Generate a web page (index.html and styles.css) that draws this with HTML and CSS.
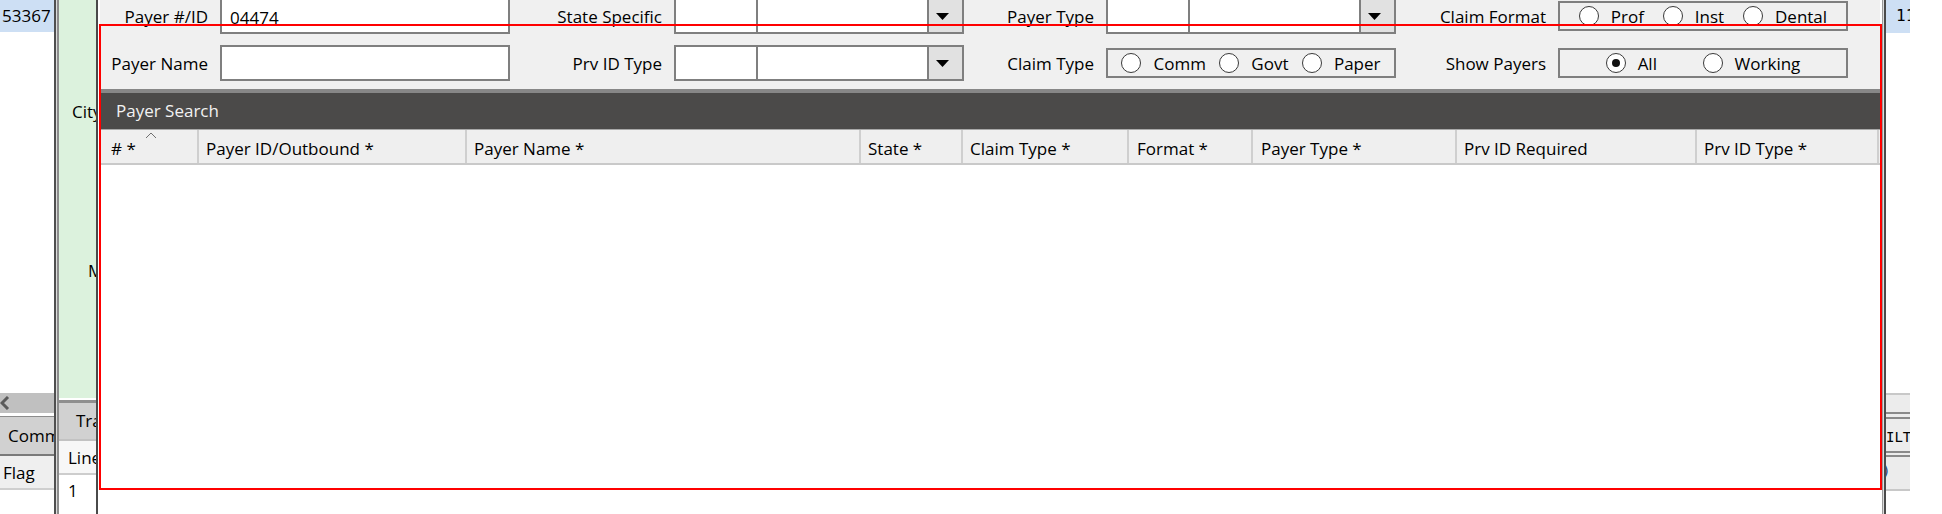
FILE: index.html
```html
<!DOCTYPE html>
<html>
<head>
<meta charset="utf-8">
<title>Payer Search</title>
<link rel="stylesheet" href="styles.css">
</head>
<body>
<div class="app">
  <div class="col-left">
    <div class="cell-blue">53367</div>
    <div class="fill"></div>
    <div class="hscroll">
      <svg class="arrow-left" width="10" height="14" viewBox="0 0 10 14"><polyline points="8,1 2,7 8,13" fill="none" stroke="#5a5a5a" stroke-width="3"/></svg>
    </div>
    <div class="tab-head">Comm</div>
    <div class="tab-row">Flag</div>
    <div class="tail"></div>
  </div>
  <div class="sep-a"></div>
  <div class="col-mid">
    <div class="green">
      <div class="city">City</div>
      <div class="mlbl">M</div>
    </div>
    <div class="mid-head">Tra</div>
    <div class="mid-row">Line</div>
    <div class="mid-cell">1</div>
  </div>
  <div class="sep-b"></div>
  <div class="dialog">
    <div class="form">
      <div class="lbl">Payer #/ID</div>
      <div class="input">04474</div>
      <div class="lbl">State Specific</div>
      <div class="dd"><div class="dd-a"></div><div class="dd-b"></div><div class="dd-btn"><svg width="13" height="7" viewBox="0 0 13 7"><polygon points="0,0 13,0 6.5,7" fill="#000"/></svg></div></div>
      <div class="lbl">Payer Type</div>
      <div class="dd"><div class="dd-a"></div><div class="dd-b"></div><div class="dd-btn"><svg width="13" height="7" viewBox="0 0 13 7"><polygon points="0,0 13,0 6.5,7" fill="#000"/></svg></div></div>
      <div class="lbl">Claim Format</div>
      <div class="rg">
        <div class="radio"><span class="circ"></span><span class="rtxt">Prof</span></div>
        <div class="radio"><span class="circ"></span><span class="rtxt">Inst</span></div>
        <div class="radio"><span class="circ"></span><span class="rtxt">Dental</span></div>
      </div>

      <div class="lbl">Payer Name</div>
      <div class="input"></div>
      <div class="lbl">Prv ID Type</div>
      <div class="dd"><div class="dd-a"></div><div class="dd-b"></div><div class="dd-btn"><svg width="13" height="7" viewBox="0 0 13 7"><polygon points="0,0 13,0 6.5,7" fill="#000"/></svg></div></div>
      <div class="lbl">Claim Type</div>
      <div class="rg">
        <div class="radio"><span class="circ"></span><span class="rtxt">Comm</span></div>
        <div class="radio"><span class="circ"></span><span class="rtxt">Govt</span></div>
        <div class="radio"><span class="circ"></span><span class="rtxt">Paper</span></div>
      </div>
      <div class="lbl">Show Payers</div>
      <div class="rg">
        <div class="radio"><span class="circ on"></span><span class="rtxt">All</span></div>
        <div class="radio"><span class="circ"></span><span class="rtxt">Working</span></div>
      </div>
    </div>
    <div class="titlebar">Payer Search</div>
    <div class="thead">
      <div class="th w1">
        <svg class="sort" width="12" height="7" viewBox="0 0 12 7"><polyline points="1,6 6,1 11,6" fill="none" stroke="#707070" stroke-width="1"/></svg>
        # *
      </div>
      <div class="th w2">Payer ID/Outbound *</div>
      <div class="th w3">Payer Name *</div>
      <div class="th w4">State *</div>
      <div class="th w5">Claim Type *</div>
      <div class="th w6">Format *</div>
      <div class="th w7">Payer Type *</div>
      <div class="th w8">Prv ID Required</div>
      <div class="th w9">Prv ID Type *</div>
    </div>
    <div class="tbody"></div>
  </div>
  <div class="sep-c"></div>
  <div class="col-right">
    <div class="rc-blue">11</div>
    <div class="fill"></div>
    <div class="rc-a"></div>
    <div class="rc-b"></div>
    <div class="rc-c">ILT</div>
    <div class="rc-d"></div>
    <div class="rc-e">)</div>
    <div class="rc-tail"></div>
  </div>
  <div class="col-blank"></div>
</div>
<div class="highlight"></div>
</body>
</html>
```
FILE: styles.css
```css
* { box-sizing: border-box; }
html, body { margin: 0; padding: 0; }
body {
  width: 1942px;
  height: 514px;
  overflow: hidden;
  background: #ffffff;
  font-family: "Open Sans", "Liberation Sans", Arial, sans-serif;
  font-size: 17px;
  line-height: 20px;
  color: #000;
  position: relative;
}
.app { display: flex; height: 514px; }

/* ---------- left background column ---------- */
.col-left {
  width: 54px; flex: none;
  display: flex; flex-direction: column;
  overflow: hidden; white-space: nowrap;
}
.cell-blue { height: 32px; flex: none; background: #cddff4; padding: 6px 0 0 2px; }
.fill { flex: 1; }
.hscroll { height: 20px; flex: none; background: #c0c0c0; display: flex; align-items: center; }
.arrow-left { display: block; }
.tab-head {
  flex: none; height: 40px; margin-top: 3px;
  border-top: 1px solid #8c8c8c; border-bottom: 2px solid #7a7a7a;
  background: #d1d1d1; padding: 9px 0 0 8px;
}
.tab-row {
  flex: none; height: 34px; background: #efefef;
  border-bottom: 2px solid #cfcfcf; padding: 7px 0 0 3px;
}
.tail { flex: none; height: 24px; }

.sep-a {
  width: 5px; flex: none;
  border-left: 2px solid #4f4f4f; border-right: 2px solid #8c8c8c;
  background: #dcdcdc;
}

/* ---------- middle background column ---------- */
.col-mid {
  width: 37px; flex: none;
  display: flex; flex-direction: column;
  overflow: hidden; white-space: nowrap;
}
.green { height: 398px; flex: none; background: #dcf2dd; padding-top: 102px; }
.city { padding-left: 13px; }
.mlbl { padding-left: 29px; margin-top: 139px; }
.mid-head {
  flex: none; height: 41px; margin-top: 2px;
  border-top: 3px solid #8f8f8f; border-bottom: 2px solid #c2c2c2;
  background: #d1d1d1; padding: 8px 0 0 17px;
}
.mid-row {
  flex: none; height: 34px; background: #f7f7f7;
  border-bottom: 2px solid #cdcdcd; padding: 7px 0 0 9px;
}
.mid-cell { padding: 6px 0 0 9px; }

.sep-b { width: 2px; flex: none; background: #4a4a4a; }

/* ---------- dialog ---------- */
.dialog {
  width: 1782px; flex: none;
  border-left: 2px solid #ffffff;
  display: flex; flex-direction: column;
  overflow: hidden;
}
.form {
  flex: none;
  margin-top: -2px;
  background: #f0f0f0;
  display: grid;
  grid-template-columns: 108px 290px 140px 290px 118px 290px 138px 290px;
  grid-template-rows: 36px 36px;
  column-gap: 12px;
  row-gap: 11px;
  padding-bottom: 8px;
}
.lbl { text-align: right; padding-top: 9px; white-space: nowrap; }
.input {
  border: 2px solid #7f7f7f; background: #fff;
  padding: 8px 0 0 8px;
}
.dd { display: flex; border: 2px solid #7f7f7f; background: #fff; }
.dd-a { width: 80px; flex: none; }
.dd-b { width: 171px; flex: none; border-left: 2px solid #7f7f7f; }
.dd-btn {
  width: 35px; flex: none;
  border-left: 2px solid #7f7f7f; background: #e1e1e1;
  display: flex; align-items: center; padding-left: 7px;
}
.dd-btn svg { display: block; }
.rg {
  align-self: center; height: 30px;
  border: 2px solid #7f7f7f;
  display: flex; justify-content: space-evenly; align-items: center;
}
.radio { display: flex; align-items: center; gap: 12px; }
.circ {
  width: 20px; height: 20px; flex: none;
  border: 1px solid #3a3a3a; border-radius: 50%;
  background: #fff;
  display: flex; align-items: center; justify-content: center;
}
.circ.on::after {
  content: ""; width: 8px; height: 8px; border-radius: 50%; background: #111;
}
.rtxt { padding-top: 2px; white-space: nowrap; }

.titlebar {
  flex: none; height: 41px;
  border-top: 4px solid #878787; border-bottom: 1px solid #a8a8a8;
  background: #4b4a49; color: #f2f2f2;
  padding: 8px 0 0 16px;
}
.thead {
  flex: none; height: 35px; display: flex;
  background: #efefef; border-bottom: 2px solid #c9c9c9;
}
.th {
  flex: none; position: relative;
  border-right: 2px solid #cfcfcf;
  padding: 9px 0 0 7px;
  white-space: nowrap; overflow: hidden;
}
.sort { position: absolute; left: 45px; top: 2px; display: block; }
.w1 { width: 99px; padding-left: 11px; }
.w2 { width: 268px; }
.w3 { width: 394px; }
.w4 { width: 102px; }
.w5 { width: 166px; }
.w6 { width: 124px; padding-left: 8px; }
.w7 { width: 204px; padding-left: 8px; }
.w8 { width: 240px; }
.w9 { width: 182px; }
.tbody { flex: 1; background: #fff; }

.sep-c {
  width: 6px; flex: none;
  border-left: 2px solid #ffffff; border-right: 2px solid #4a4a4a;
  background: linear-gradient(90deg, #9a9a9a 0 1px, #dcdcdc 1px 2px);
}

/* ---------- right background column ---------- */
.col-right {
  width: 24px; flex: none;
  display: flex; flex-direction: column;
  overflow: hidden; white-space: nowrap;
  font-family: "DejaVu Sans Mono", "Liberation Mono", monospace;
}
.rc-blue { flex: none; height: 33px; background: #cddff4; padding: 6px 0 0 10px; font-size: 16px; }
.rc-a { flex: none; height: 21px; background: #ececec; border-top: 2px solid #c8c8c8; border-bottom: 2px solid #8a8a8a; }
.rc-b { flex: none; height: 5px; background: #ececec; border-bottom: 2px solid #8a8a8a; }
.rc-c { flex: none; height: 34px; background: #ececec; border-bottom: 2px solid #8a8a8a; font-size: 14px; padding-top: 8px; }
.rc-d { flex: none; height: 4px; background: #ececec; border-bottom: 2px solid #8a8a8a; }
.rc-e { flex: none; height: 34px; background: #ececec; border-bottom: 2px solid #c8c8c8; font-size: 14px; padding-top: 4px; text-indent: -4px; color: #1d3f77; }
.rc-tail { flex: none; height: 23px; }

.col-blank { flex: 1; }

/* ---------- annotation overlay ---------- */
.highlight {
  position: absolute;
  left: 99px; top: 24px;
  width: 1783px; height: 466px;
  border: 2px solid #ff0000;
  pointer-events: none;
}
```
